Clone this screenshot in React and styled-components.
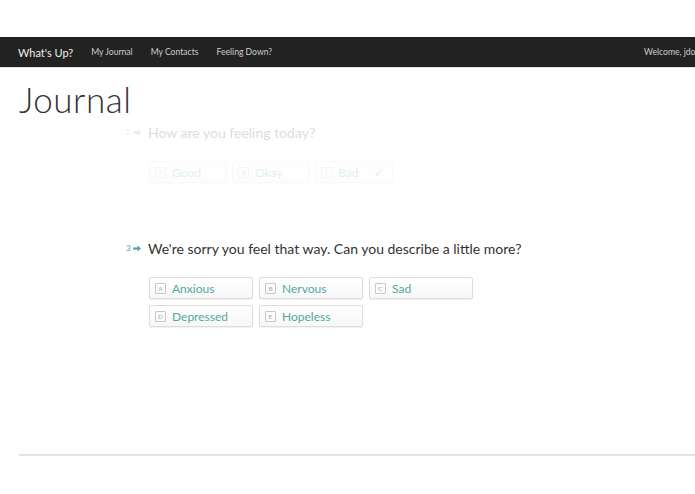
import React from "react";
import styled, { createGlobalStyle } from "styled-components";

const GlobalStyle = createGlobalStyle`
  html, body {
    margin: 0;
    padding: 0;
    background: #fff;
    overflow: hidden;
  }
  body {
    font-family: "Lato", "Open Sans", sans-serif;
    color: #333;
  }
`;

const Page = styled.div`
  width: 740px;
  padding-top: 37px;
`;

const Navbar = styled.nav`
  height: 30px;
  background: #222;
  display: flex;
  align-items: center;
  padding: 0 18px;
  border-bottom: 1px solid #e5e5e5;
`;

const Brand = styled.span`
  color: #eee;
  font-size: 11px;
  margin-right: 18px;
`;

const NavLink = styled.span`
  color: #ccc;
  font-size: 8.6px;
  margin-right: 18px;
`;

const Welcome = styled.span`
  margin-left: auto;
  color: #ccc;
  font-size: 8.6px;
  margin-right: 22px;
`;

const Content = styled.main`
  padding: 0 0 0 19px;
`;

const Title = styled.h1`
  font-weight: 300;
  font-size: 35px;
  margin: 11px 0 0;
  line-height: 40px;
  color: #333;
  letter-spacing: 0.5px;
`;

const Question = styled.section`
  padding-left: 106px;
  opacity: ${(p) => (p.faded ? 0.17 : 1)};
  margin-top: ${(p) => p.top}px;
`;

const Prompt = styled.div`
  display: flex;
  align-items: center;
  font-size: 14px;
  color: #333;
  height: 20px;
`;

const Num = styled.span`
  color: #4aa79d;
  font-size: 8px;
  width: 23px;
  padding-left: 1px;
  box-sizing: border-box;
  display: inline-flex;
  align-items: center;
  gap: 2px;
`;

const Choices = styled.div`
  display: grid;
  grid-template-columns: repeat(3, ${(p) => p.w}px);
  gap: 6px ${(p) => p.gap}px;
  margin: 19px 0 0 24px;
`;

const Choice = styled.div`
  height: 20px;
  border: 1px solid #ddd;
  border-radius: 2px;
  background: linear-gradient(#fff, #f7f7f7);
  box-shadow: 0 1px 1px rgba(0, 0, 0, 0.06);
  display: flex;
  align-items: center;
  padding: 0 5px;
  color: #4fa99f;
  font-size: 12px;
`;

const Key = styled.span`
  width: 9px;
  height: 9px;
  border: 1px solid #c8c8c8;
  border-radius: 1px;
  font-size: 6.5px;
  color: #aaa;
  display: inline-flex;
  align-items: center;
  justify-content: center;
  margin-right: 6px;
`;

const Check = styled.span`
  margin-left: auto;
  margin-right: 3px;
  font-size: 12px;
`;

const Rule = styled.hr`
  border: 0;
  border-top: 2px solid #e3e3e3;
  margin: 127px 0 0;
`;

const Arrow = () => (
  <svg width="8" height="7" viewBox="0 0 8 7">
    <path d="M0 2.6h4.4V0.5L8 3.5 4.4 6.5V4.4H0z" fill="#4aa79d" />
  </svg>
);

export default function App() {
  return (
    <>
      <GlobalStyle />
      <Page>
        <Navbar>
          <Brand>What's Up?</Brand>
          <NavLink>My Journal</NavLink>
          <NavLink>My Contacts</NavLink>
          <NavLink>Feeling Down?</NavLink>
          <Welcome>Welcome, jdoe</Welcome>
        </Navbar>
        <Content>
          <Title>Journal</Title>
          <Question faded top={3}>
            <Prompt>
              <Num>2 <Arrow /></Num>
              How are you feeling today?
            </Prompt>
            <Choices w={78} gap={5}>
              <Choice><Key>A</Key>Good</Choice>
              <Choice><Key>B</Key>Okay</Choice>
              <Choice><Key>C</Key>Bad<Check>✓</Check></Choice>
            </Choices>
          </Question>
          <Question top={55}>
            <Prompt>
              <Num>3 <Arrow /></Num>
              We're sorry you feel that way. Can you describe a little more?
            </Prompt>
            <Choices w={104} gap={6}>
              <Choice><Key>A</Key>Anxious</Choice>
              <Choice><Key>B</Key>Nervous</Choice>
              <Choice><Key>C</Key>Sad</Choice>
              <Choice><Key>D</Key>Depressed</Choice>
              <Choice><Key>E</Key>Hopeless</Choice>
            </Choices>
          </Question>
          <Rule />
        </Content>
      </Page>
    </>
  );
}
